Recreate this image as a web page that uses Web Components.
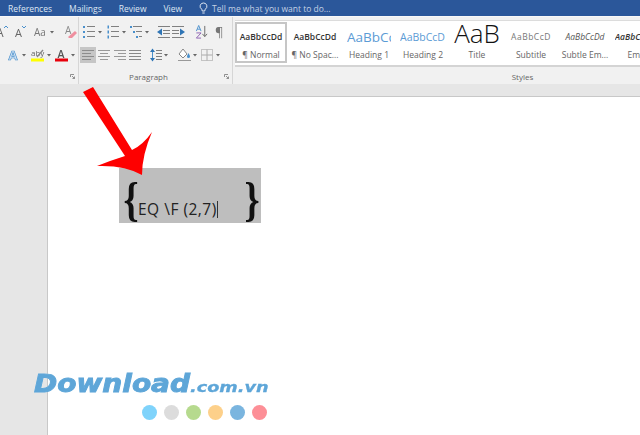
<!DOCTYPE html>
<html>
<head>
<meta charset="utf-8">
<title>Word</title>
<style>
  html, body { margin: 0; height: 100%; overflow: hidden; }
  body { font-family: "Open Sans", "Liberation Sans", sans-serif; background: #e6e6e6; display: flex; flex-direction: column; width: 640px; height: 435px; position: relative; }
</style>
</head>
<body>
<word-tabs></word-tabs>
<word-ribbon>
  <ribbon-group slot="font" width="79">
    <tool-row>
      <tool-btn icon="growA" w="12" x="-4"></tool-btn>
      <tool-btn icon="shrinkA" w="11" x="7"></tool-btn>
      <tool-btn icon="case" w="14" x="8"></tool-btn>
      <tool-btn icon="caret" w="4" x="2"></tool-btn>
      <tool-btn icon="eraser" w="12" x="11"></tool-btn>
    </tool-row>
    <tool-row>
      <tool-btn icon="fontA" w="12" x="8"></tool-btn>
      <tool-btn icon="caret" w="4" x="2"></tool-btn>
      <tool-btn icon="aby" w="14" x="5"></tool-btn>
      <tool-btn icon="caret" w="4" x="2"></tool-btn>
      <tool-btn icon="redA" w="13" x="4"></tool-btn>
      <tool-btn icon="caret" w="4" x="3"></tool-btn>
    </tool-row>
  </ribbon-group>
  <ribbon-group slot="para" width="154" label="Paragraph">
    <tool-row>
      <tool-btn icon="bullets" w="12" x="4"></tool-btn>
      <tool-btn icon="caret" w="4" x="3"></tool-btn>
      <tool-btn icon="numbers" w="12" x="5"></tool-btn>
      <tool-btn icon="caret" w="4" x="3"></tool-btn>
      <tool-btn icon="multi" w="12" x="4"></tool-btn>
      <tool-btn icon="caret" w="4" x="3"></tool-btn>
      <tool-btn icon="outdent" w="13" x="8"></tool-btn>
      <tool-btn icon="indent" w="13" x="2"></tool-btn>
      <tool-btn icon="sort" w="13" x="10"></tool-btn>
      <tool-btn icon="pilcrow" w="9" x="7"></tool-btn>
    </tool-row>
    <tool-row>
      <tool-btn icon="alignLeft" w="16" x="1" on></tool-btn>
      <tool-btn icon="alignCenter" w="12" x="2"></tool-btn>
      <tool-btn icon="alignRight" w="12" x="4"></tool-btn>
      <tool-btn icon="justify" w="12" x="3"></tool-btn>
      <tool-btn icon="spacing" w="12" x="9"></tool-btn>
      <tool-btn icon="caret" w="4" x="2"></tool-btn>
      <tool-btn icon="shading" w="13" x="10"></tool-btn>
      <tool-btn icon="caret" w="4" x="2"></tool-btn>
      <tool-btn icon="borders" w="12" x="4"></tool-btn>
      <tool-btn icon="caret" w="4" x="3"></tool-btn>
    </tool-row>
  </ribbon-group>
  <style-gallery slot="styles">
    <style-cell kind="normal" name="¶ Normal" sample="AaBbCcDd" selected></style-cell>
    <style-cell kind="normal" name="¶ No Spac..." sample="AaBbCcDd"></style-cell>
    <style-cell kind="h1" name="Heading 1" sample="AaBbCc"></style-cell>
    <style-cell kind="h2" name="Heading 2" sample="AaBbCcD"></style-cell>
    <style-cell kind="title" name="Title" sample="AaB"></style-cell>
    <style-cell kind="subtitle" name="Subtitle" sample="AaBbCcD"></style-cell>
    <style-cell kind="em" name="Subtle Em..." sample="AaBbCcDd"></style-cell>
    <style-cell kind="strong" name="Emph" sample="AaBbCcDd"></style-cell>
  </style-gallery>
</word-ribbon>
<doc-page>
  <eq-field>EQ \F (2,7)</eq-field>
</doc-page>
<red-arrow></red-arrow>
<site-mark></site-mark>

<script>
const line = (x1, y, x2, c = '#808080') => `<path d="M${x1} ${y}H${x2}" stroke="${c}" fill="none"/>`;
const blue = '#4a90cc';
const ICONS = {
  caret: `<svg viewBox="0 0 4 14"><path d="M0 6h4L2 8.500z" fill="#666"/></svg>`,
  growA: `<svg viewBox="0 0 12 14"><text x="0" y="12" font-size="12" font-family="Open Sans" fill="#666">A</text><path d="M8 3l2-2 2 2" stroke="${blue}" fill="none"/></svg>`,
  shrinkA: `<svg viewBox="0 0 11 14"><text x="0" y="12" font-size="11" font-family="Open Sans" fill="#666">A</text><path d="M7 1l2 2 2-2" stroke="${blue}" fill="none"/></svg>`,
  case: `<svg viewBox="0 0 14 14"><text x="0" y="11" font-size="10" font-family="Open Sans" fill="#777">Aa</text></svg>`,
  eraser: `<svg viewBox="0 0 12 14"><text x="0" y="9" font-size="10" font-family="Open Sans" fill="#888">A</text><path d="M3 12l7-6 2 2-5 5H4z" fill="#ef8f9f"/></svg>`,
  fontA: `<svg viewBox="0 0 12 14"><text x="0.500" y="12" font-size="13" font-weight="700" font-family="Open Sans" fill="#cfe2f5" stroke="${blue}" stroke-width=".7">A</text></svg>`,
  aby: `<svg viewBox="0 0 14 14"><text x="0" y="8" font-size="8" font-family="Open Sans" fill="#666">aby</text><path d="M6 9l6-7" stroke="#888" stroke-width="1.300"/><rect y="10.500" width="13" height="3" fill="#ffff00"/></svg>`,
  redA: `<svg viewBox="0 0 13 14"><text x="2.500" y="10" font-size="10.500" font-weight="600" font-family="Open Sans" fill="#555">A</text><rect y="10.500" width="13" height="3" fill="#e8000b"/></svg>`,
  bullets: `<svg viewBox="0 0 12 14">${[2,7,12].map(y => `<rect x="0" y="${y-1}" width="2" height="2" fill="${blue}"/>` + line(4, y - .5, 12)).join('')}</svg>`,
  numbers: `<svg viewBox="0 0 12 14">${[2,7,12].map(y => `<rect x=".5" y="${y-1.5}" width="1.500" height="3" fill="${blue}"/>` + line(4, y - .5, 12)).join('')}</svg>`,
  multi: `<svg viewBox="0 0 12 14"><rect y="1" width="2" height="2" fill="${blue}"/>${line(3, 1.5, 12)}<rect x="3" y="6" width="2" height="2" fill="${blue}"/>${line(6, 6.5, 12)}<rect x="6" y="11" width="2" height="2" fill="${blue}"/>${line(9, 11.5, 12)}</svg>`,
  outdent: `<svg viewBox="0 0 13 14">${line(1, 1.5, 13)}${line(6, 5.5, 13)}${line(6, 8.5, 13)}${line(1, 12.5, 13)}<path d="M0 7l5-3.500v7z" fill="#2f75b5"/></svg>`,
  indent: `<svg viewBox="0 0 13 14">${line(0, 1.5, 12)}${line(0, 5.5, 7)}${line(0, 8.5, 7)}${line(0, 12.5, 12)}<path d="M13 7L8 3.500v7z" fill="#2f75b5"/></svg>`,
  sort: `<svg viewBox="0 0 13 15"><path d="M1 6.500L3.500 .5 6 6.500M2 4.500h3" stroke="${blue}" fill="none"/><path d="M1 8.500h5L1 14h5" stroke="#8a5fb0" fill="none"/><path d="M10 1v11M7.500 9.500l2.500 3 2.500-3" stroke="#666" fill="none"/></svg>`,
  pilcrow: `<svg viewBox="0 0 9 14"><text x="0" y="12" font-size="13" font-family="Open Sans" fill="#777">¶</text></svg>`,
  alignLeft: `<svg viewBox="0 0 16 16">${line(2, 3.5, 14, '#8c8c8c')}${line(2, 6.5, 11, '#8c8c8c')}${line(2, 9.5, 14, '#8c8c8c')}${line(2, 12.5, 11, '#8c8c8c')}</svg>`,
  alignCenter: `<svg viewBox="0 0 12 14">${line(0, 2.5, 12, '#999')}${line(2, 5.5, 10, '#999')}${line(0, 8.5, 12, '#999')}${line(2, 11.5, 10, '#999')}</svg>`,
  alignRight: `<svg viewBox="0 0 12 14">${line(0, 2.5, 12, '#999')}${line(4, 5.5, 12, '#999')}${line(0, 8.5, 12, '#999')}${line(4, 11.5, 12, '#999')}</svg>`,
  justify: `<svg viewBox="0 0 12 14">${[2.5,5.5,8.5,11.5].map(y => line(0, y, 12, '#888')).join('')}</svg>`,
  spacing: `<svg viewBox="0 0 12 14"><path d="M2.500 2v10" stroke="${blue}"/><path d="M0 4l2.500-3.500L5 4zM0 10l2.500 3.500L5 10z" fill="#2f75b5"/>${[2.5,5.5,8.5,11.5].map(y => line(6, y, 12)).join('')}</svg>`,
  shading: `<svg viewBox="0 0 13 14"><path d="M5 1L1 6l4 4 4-4z" fill="#fff" stroke="#888"/><path d="M10.500 5c1 2 1.500 2.500 1.500 3.500a1.300 1.300 0 0 1-3 0c0-1 .5-1.500 1.500-3.500z" fill="${blue}"/><path d="M0 12.500h13" stroke="#999"/></svg>`,
  borders: `<svg viewBox="0 0 12 14"><rect x=".5" y="1.500" width="11" height="11" fill="none" stroke="#c4c4c4"/><path d="M6 1.500v11M.5 7h11" stroke="#aaa"/></svg>`
};

class WordTabs extends HTMLElement {
  constructor() {
    super();
    this.attachShadow({ mode: 'open' });
    this.shadowRoot.innerHTML = `
      <style>
        :host { display: flex; align-items: center; height: 16px; background: #2b579a; color: #dfe7f3; font-size: 8.500px; padding-left: 8px; flex: none; }
        span { margin-right: 17px; white-space: nowrap; }
        svg { width: 9px; height: 13px; margin: 0 4px 0 0; }
        .tell { color: #c3d0e4; margin: 0; }
      </style>
      <span>References</span><span>Mailings</span><span>Review</span><span>View</span>
      <svg viewBox="0 0 9 13"><path d="M4.500 1a3.300 3.300 0 0 0-2 6c.5.500.7 1 .7 2h2.600c0-1 .2-1.500.7-2a3.300 3.300 0 0 0-2-6zM3.300 11h2.400" fill="none" stroke="#dfe7f3"/></svg>
      <span class="tell">Tell me what you want to do...</span>`;
  }
}

class WordRibbon extends HTMLElement {
  constructor() {
    super();
    this.attachShadow({ mode: 'open' });
    this.shadowRoot.innerHTML = `
      <style>
        :host { display: flex; height: 67px; background: #f1f1f1; border-top: 1px solid #f8f8f8; flex: none; overflow: hidden; }
        .styles { flex: 1; min-width: 0; display: flex; flex-direction: column; padding: 3px 0 0 2px; }
        .name { text-align: center; font-size: 8px; color: #666; margin-top: 4px; padding-left: 170px; }
      </style>
      <slot name="font"></slot>
      <slot name="para"></slot>
      <div class="styles"><slot name="styles"></slot><div class="name">Styles</div></div>`;
  }
}

class RibbonGroup extends HTMLElement {
  constructor() {
    super();
    this.attachShadow({ mode: 'open' });
  }
  connectedCallback() {
    const label = this.getAttribute('label') || '';
    this.shadowRoot.innerHTML = `
      <style>
        :host { display: flex; flex-direction: column; flex: none; box-sizing: border-box; width: ${this.getAttribute('width')}px; border-right: 1px solid #d6d6d6; padding-top: 7px; position: relative; }
        .rows { display: flex; flex-direction: column; gap: 7px; }
        .label { position: absolute; left: 0; right: 14px; top: 54px; text-align: center; font-size: 8px; color: #666; }
        .launch { position: absolute; right: 3px; top: 57px; width: 5px; height: 5px; }
      </style>
      <div class="rows"><slot></slot></div>
      <div class="label">${label}</div>
      <svg class="launch" viewBox="0 0 5 5"><path d="M.5 3V.5H4M2 2l2.500 2.500M4.500 2.500v2h-2" stroke="#777" fill="none" stroke-width=".8"/></svg>`;
  }
}

class ToolRow extends HTMLElement {
  constructor() {
    super();
    this.attachShadow({ mode: 'open' });
    this.shadowRoot.innerHTML = `<style>:host { display: flex; align-items: center; height: 16px; }</style><slot></slot>`;
  }
}

class ToolBtn extends HTMLElement {
  constructor() {
    super();
    this.attachShadow({ mode: 'open' });
  }
  connectedCallback() {
    const w = this.getAttribute('w');
    const on = this.hasAttribute('on');
    this.shadowRoot.innerHTML = `
      <style>
        :host { display: block; flex: none; width: ${w}px; height: ${on ? 16 : 14}px; margin-left: ${this.getAttribute('x') || 0}px; ${on ? 'background: #c6c6c6;' : ''} }
        svg { display: block; width: 100%; height: 100%; overflow: visible; filter: blur(.3px); }
      </style>${ICONS[this.getAttribute('icon')]}`;
  }
}

class StyleGallery extends HTMLElement {
  constructor() {
    super();
    this.attachShadow({ mode: 'open' });
    this.shadowRoot.innerHTML = `
      <style>
        :host { display: flex; gap: 2px; height: 44px; background: #fff; border-top: 1px solid #dcdcdc; border-bottom: 2px solid #d4d4d4; overflow: hidden; box-sizing: content-box; }
      </style><slot></slot>`;
  }
}

class StyleCell extends HTMLElement {
  constructor() {
    super();
    this.attachShadow({ mode: 'open' });
  }
  connectedCallback() {
    const selected = this.hasAttribute('selected');
    this.shadowRoot.innerHTML = `
      <style>
        :host { display: flex; flex: none; flex-direction: column; align-items: center; box-sizing: border-box; width: 52px; height: 41px; margin-top: 1px; overflow: hidden; border: 2px solid ${selected ? '#c6c6c6' : 'transparent'}; }
        .sample { height: 25px; display: flex; align-items: center; justify-content: center; white-space: nowrap; width: 48px; overflow: hidden; color: #333; font-size: 8.500px; font-weight: 600; }
        .h1 { color: #5b9bd5; font-size: 13.500px; font-weight: 400; justify-content: flex-start; width: 44px; }
        .h2 { color: #5b9bd5; font-size: 10.500px; font-weight: 400; justify-content: flex-start; width: 46px; }
        .title { color: #111; font-size: 26px; font-weight: 300; line-height: 25px; box-sizing: border-box; padding-bottom: 7px; }
        .subtitle { color: #777; font-size: 8.500px; font-weight: 400; letter-spacing: .5px; }
        .em { color: #555; font-style: italic; font-weight: 400; }
        .strong { color: #333; font-style: italic; font-weight: 600; justify-content: flex-start; }
        .name { font-size: 8.500px; color: #666; white-space: nowrap; line-height: 12px; }
      </style>
      <div class="sample ${this.getAttribute('kind')}">${this.getAttribute('sample')}</div>
      <div class="name">${this.getAttribute('name')}</div>`;
  }
}

class DocPage extends HTMLElement {
  constructor() {
    super();
    this.attachShadow({ mode: 'open' });
    this.shadowRoot.innerHTML = `
      <style>
        :host { display: block; flex: 1; margin: 12px 0 0 47px; background: #fff; border-left: 1px solid #c8c8c8; border-top: 1px solid #c8c8c8; padding: 71px 0 0 71px; }
      </style><slot></slot>`;
  }
}

class EqField extends HTMLElement {
  constructor() {
    super();
    this.attachShadow({ mode: 'open' });
    this.shadowRoot.innerHTML = `
      <style>
        :host { display: flex; align-items: flex-end; width: 142px; height: 55px; box-sizing: border-box; background: #bebebe; color: #222; padding: 0 4px 5px 3px; font-family: "Open Sans", sans-serif; }
        .brace { font-family: "Liberation Serif", serif; font-weight: 700; font-size: 48px; line-height: 48px; width: 14px; text-align: center; color: #111; flex: none; margin-bottom: -6px; transform: scaleX(.8); }
        .text { flex: 1; padding-left: 2px; font-size: 15.500px; letter-spacing: .5px; line-height: 18px; white-space: nowrap; }
        .cursor { display: inline-block; width: 1px; height: 17px; background: #333; vertical-align: -3px; }
      </style>
      <span class="brace">{</span>
      <span class="text"><slot></slot><span class="cursor"></span></span>
      <span class="brace">}</span>`;
  }
}

class RedArrow extends HTMLElement {
  constructor() {
    super();
    this.attachShadow({ mode: 'open' });
    this.shadowRoot.innerHTML = `
      <style>:host { position: absolute; left: 0; top: 0; width: 160px; height: 180px; } svg { display: block; }</style>
      <svg width="160" height="180" viewBox="0 0 160 180"><path d="M83 92L93 87L132 150Q143 145 152 132Q142 155 142 175Q125 165 97 166Q112 160 125 156Z" fill="#fe0000"/></svg>`;
  }
}

class SiteMark extends HTMLElement {
  constructor() {
    super();
    this.attachShadow({ mode: 'open' });
    this.shadowRoot.innerHTML = `
      <style>
        :host { position: absolute; left: 34px; top: 369px; width: 240px; font-family: "DejaVu Sans", sans-serif; font-style: italic; font-weight: 700; color: #5ea6d8; }
        .word { display: flex; align-items: baseline; white-space: nowrap; line-height: 30px; text-shadow: 0 0 1px #fff; }
        .big { display: inline-block; width: 156px; font-size: 25px; transform: scaleX(1.12); transform-origin: left; -webkit-text-stroke: .9px #5ea6d8; }
        .small { display: inline-block; font-size: 14.500px; transform: scaleX(1.22); transform-origin: left; -webkit-text-stroke: .3px #5ea6d8; }
        .dots { display: flex; gap: 7px; margin: 3px 0 0 108px; }
        i { display: block; width: 15px; height: 15px; border-radius: 50%; }
      </style>
      <div class="word"><span class="big">Download</span><span class="small">.com.vn</span></div>
      <div class="dots">
        <i style="background:#7fd3fb"></i><i style="background:#dcdcdc"></i><i style="background:#b6da8e"></i>
        <i style="background:#fdd08a"></i><i style="background:#7ab5df"></i><i style="background:#fd8f97"></i>
      </div>`;
  }
}

customElements.define('word-tabs', WordTabs);
customElements.define('word-ribbon', WordRibbon);
customElements.define('ribbon-group', RibbonGroup);
customElements.define('tool-row', ToolRow);
customElements.define('tool-btn', ToolBtn);
customElements.define('style-gallery', StyleGallery);
customElements.define('style-cell', StyleCell);
customElements.define('doc-page', DocPage);
customElements.define('eq-field', EqField);
customElements.define('red-arrow', RedArrow);
customElements.define('site-mark', SiteMark);
</script>
</body>
</html>
